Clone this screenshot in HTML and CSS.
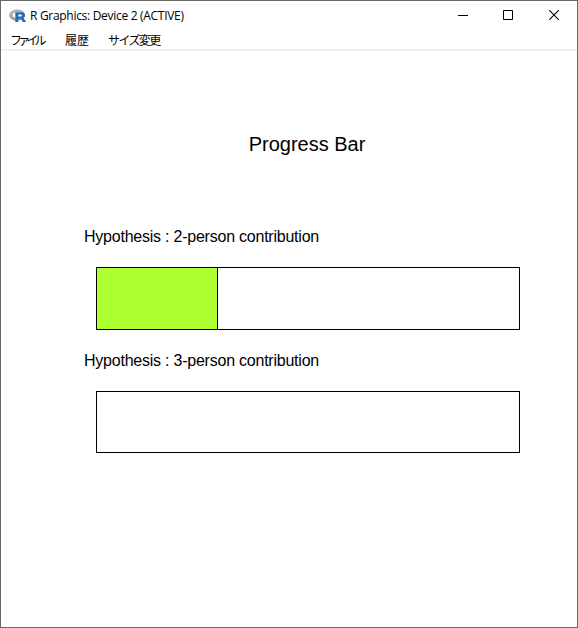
FILE: index.html
```html
<!DOCTYPE html>
<html lang="ja">
<head>
<meta charset="utf-8">
<title>R Graphics: Device 2 (ACTIVE)</title>
<link rel="stylesheet" href="styles.css">
</head>
<body>
<div class="window">
  <header class="titlebar">
    <svg class="logo" width="17" height="14" viewBox="0 0 17 14">
      <defs>
        <linearGradient id="ring" x1="0" y1="0" x2="1" y2="1"><stop offset="0" stop-color="#c2c5c8"/><stop offset="1" stop-color="#84838b"/></linearGradient>
      </defs>
      <path fill="url(#ring)" fill-rule="evenodd" d="M8 .5C3.600.5 0 2.900 0 6s3.600 5.600 8 5.600 8-2.500 8-5.600S12.400.5 8 .5zM9.200 3c3.200 0 5.400 1 5.400 3.300s-2.400 3.400-5.400 3.400S3.800 8.600 3.800 6.300 6.200 3 9.200 3z"/>
      <path fill="#2a68b5" fill-rule="evenodd" d="M6.300 3.200h6c2.300 0 3.600 1.100 3.600 3 0 1.300-.7 2.200-1.900 2.600.6.2.9.6 1.200 1.100l2 3.100h-3.400l-1.500-2.500c-.3-.6-.6-.8-1.200-.8H9.300v3.300h-3zM9.300 5.400v2.100h2.500c.8 0 1.100-.4 1.100-1s-.4-1.100-1.100-1.100z"/>
    </svg>
    <span class="caption">R Graphics: Device 2 (ACTIVE)</span>
    <div class="controls">
      <svg width="10" height="10" viewBox="0 0 10 10" shape-rendering="crispEdges"><path d="M0 5h10v1H0z"/></svg>
      <svg class="maximize" width="10" height="10" viewBox="0 0 10 10"><path d="M.5.5h9v9h-9z" fill="none" stroke="#000"/></svg>
      <svg width="10" height="10" viewBox="0 0 10 10"><path d="M.2.200l9.600 9.600M9.800.2l-9.600 9.600" fill="none" stroke="#000" stroke-width="1.100"/></svg>
    </div>
  </header>
  <nav class="menu">
    <span class="item file">ファイル</span>
    <span class="item history">履歴</span>
    <span class="item resize">サイズ変更</span>
  </nav>
  <main class="plot">
    <h1>Progress Bar</h1>
    <section>
      <h2>Hypothesis : 2-person contribution</h2>
      <div class="bar"><div class="fill"></div></div>
    </section>
    <section>
      <h2>Hypothesis : 3-person contribution</h2>
      <div class="bar short"></div>
    </section>
  </main>
</div>
</body>
</html>
```
FILE: styles.css
```css
* { box-sizing: border-box; }
body { margin: 0; background: #fff; color: #000; }
.window {
  width: 578px;
  height: 628px;
  border: 1px solid #696969;
  overflow: hidden;
}
.titlebar {
  display: flex;
  align-items: center;
  height: 29px;
  padding: 0 18px 0 8px;
}
.logo { margin-right: 4px; }
.caption {
  font: 12px/16px "Open Sans", "Noto Sans", sans-serif;
  letter-spacing: -0.3px;
  white-space: nowrap;
}
.controls {
  display: flex;
  align-self: flex-start;
  gap: 35px;
  margin: 9px 0 0 auto;
}
.controls svg { display: block; }
.controls .maximize { margin-right: 1px; }
.menu {
  display: flex;
  height: 21px;
  padding-left: 9px;
  border-bottom: 2px solid #f0f0f0;
  font: 12px/20px "Noto Sans CJK JP", sans-serif;
}
.item { white-space: nowrap; }
.file { width: 55px; letter-spacing: -3.800px; }
.history { width: 43px; }
.resize { letter-spacing: -1.600px; }
.plot {
  padding: 81px 57px 0 83px;
  font-family: "Liberation Sans", Arial, sans-serif;
}
h1 {
  margin: 0 0 71px;
  padding-left: 10px;
  font-size: 20px;
  font-weight: 400;
  line-height: 24px;
  text-align: center;
}
h2 {
  margin: 0 0 20px;
  font-size: 16px;
  font-weight: 400;
  line-height: 20px;
  letter-spacing: -0.230px;
  white-space: nowrap;
}
section { margin-bottom: 21px; }
.bar {
  height: 63px;
  margin-left: 12px;
  border: 1px solid #000;
}
.short { height: 62px; }
.fill {
  width: 121px;
  height: 100%;
  background: #adff2f;
  border-right: 1px solid #000;
}
```
